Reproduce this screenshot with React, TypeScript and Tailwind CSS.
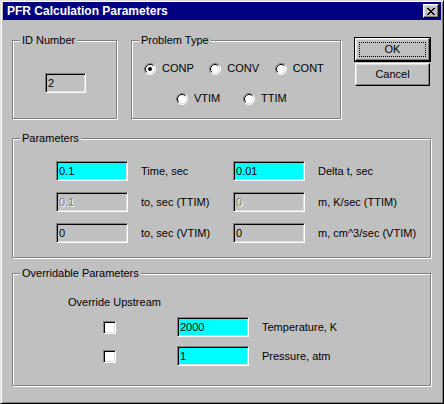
import React from "react";

const sunken =
  "border border-t-[#808080] border-l-[#808080] border-b-white border-r-white shadow-[inset_1px_1px_0_#000,inset_-1px_-1px_0_#dfdfdf]";
const raised =
  "border border-t-white border-l-white border-b-black border-r-black shadow-[inset_-1px_-1px_0_#808080,inset_1px_1px_0_#dfdfdf]";

function GroupBox({ label, className, children }: { label: string; className: string; children?: React.ReactNode }) {
  return (
    <div className={`relative border border-[#808080] shadow-[inset_1px_1px_0_#fff,1px_1px_0_#fff] ${className}`}>
      <span className="absolute left-[7px] -top-[7px] px-[2px] bg-[#c0c0c0] leading-[13px]">{label}</span>
      {children}
    </div>
  );
}

function Field({ value, tone = "cyan", w = "w-[72px]" }: { value: string; tone?: "cyan" | "gray" | "disabled"; w?: string }) {
  const bg = tone === "cyan" ? "bg-[#00ffff] text-black" : tone === "gray" ? "bg-[#c0c0c0] text-black" : "bg-[#c0c0c0] text-[#808080] [text-shadow:1px_1px_0_#fff]";
  return (
    <div className={`${sunken} ${bg} ${w} h-[20px] pl-[2px] flex items-center leading-[13px]`}>{value}</div>
  );
}

function Radio({ label, checked }: { label: string; checked?: boolean }) {
  return (
    <div className="w-[67px] flex items-center gap-[6px]">
      <svg width="12" height="12" viewBox="0 0 12 12" className="shrink-0">
        <circle cx="6" cy="6" r="5" fill="#fff" />
        <path d="M2.11 9.89 A5.5 5.5 0 0 1 9.89 2.11" stroke="#808080" fill="none" />
        <path d="M9.89 2.11 A5.5 5.5 0 0 1 2.11 9.89" stroke="#fff" fill="none" />
        <path d="M2.82 9.18 A4.5 4.5 0 0 1 9.18 2.82" stroke="#000" fill="none" />
        <path d="M9.18 2.82 A4.5 4.5 0 0 1 2.82 9.18" stroke="#dfdfdf" fill="none" />
        {checked && <circle cx="6" cy="6" r="2" fill="#000" />}
      </svg>
      <span className="leading-[13px]">{label}</span>
    </div>
  );
}

const xPixels = ["11000011", "01100110", "00111100", "00011000", "00111100", "01100110", "11000011"];

export default function App() {
  return (
    <div className="w-[444px] h-[404px] bg-[#c0c0c0] border border-t-[#dfdfdf] border-l-[#dfdfdf] border-b-black border-r-black shadow-[inset_1px_1px_0_#fff,inset_-1px_-1px_0_#808080] pt-px px-[2px] text-[11px] text-black font-['Liberation_Sans',Arial,sans-serif] overflow-hidden">
      {/* title bar */}
      <div className="h-[18px] bg-[#000080] flex items-center justify-between pl-[4px] pr-[2px]">
        <span className="text-white font-bold text-[12px] leading-[14px]">PFR Calculation Parameters</span>
        <div className={`${raised} w-[16px] h-[14px] bg-[#c0c0c0] flex items-center justify-center`}>
          <svg width="8" height="7" viewBox="0 0 8 7" shapeRendering="crispEdges">
            {xPixels.map((row, y) =>
              row.split("").map((c, x) => (c === "1" ? <rect key={`${x}-${y}`} x={x} y={y} width="1" height="1" fill="#000" /> : null))
            )}
          </svg>
        </div>
      </div>

      <div className="pl-[9px]">
        {/* top row */}
        <div className="flex items-start">
          <GroupBox label="ID Number" className="mt-[20px] w-[105px] h-[79px] pt-[32px] pl-[32px]">
            <Field value="2" tone="gray" w="w-[41px]" />
          </GroupBox>

          <GroupBox label="Problem Type" className="mt-[20px] ml-[14px] w-[210px] h-[79px] pt-[21px] pl-[12px]">
            <div className="flex">
              <Radio label="CONP" checked />
              <Radio label="CONV" />
              <Radio label="CONT" />
            </div>
            <div className="flex pl-[32px] mt-[17px]">
              <Radio label="VTIM" />
              <Radio label="TTIM" />
            </div>
          </GroupBox>

          <div className="mt-[17px] ml-[13px] flex flex-col items-center gap-[1px]">
            <button className="w-[77px] h-[25px] border border-black bg-[#c0c0c0] flex">
              <span className={`${raised} flex-1 flex p-[3px]`}>
                <span className="flex-1 border border-dotted border-black flex items-center justify-center leading-[13px]">OK</span>
              </span>
            </button>
            <button className={`${raised} w-[75px] h-[23px] bg-[#c0c0c0] flex items-center justify-center leading-[13px]`}>Cancel</button>
          </div>
        </div>

        {/* parameters */}
        <GroupBox label="Parameters" className="mt-[19px] w-[419px] h-[120px] pt-[22px] pl-[43px]">
          <div className="flex flex-col gap-[11px]">
            <div className="flex items-center">
              <Field value="0.1" />
              <span className="ml-[13px] w-[92px]">Time, sec</span>
              <Field value="0.01" />
              <span className="ml-[13px]">Delta t, sec</span>
            </div>
            <div className="flex items-center">
              <Field value="0.1" tone="disabled" />
              <span className="ml-[13px] w-[92px]">to, sec (TTIM)</span>
              <Field value="0" tone="disabled" />
              <span className="ml-[13px]">m, K/sec (TTIM)</span>
            </div>
            <div className="flex items-center">
              <Field value="0" tone="gray" />
              <span className="ml-[13px] w-[92px]">to, sec (VTIM)</span>
              <Field value="0" tone="gray" />
              <span className="ml-[13px]">m, cm^3/sec (VTIM)</span>
            </div>
          </div>
        </GroupBox>

        {/* overridable */}
        <GroupBox label="Overridable Parameters" className="mt-[15px] w-[419px] h-[113px] pt-[22px]">
          <div className="pl-[55px] leading-[13px]">Override Upstream</div>
          <div className="mt-[8px] flex flex-col gap-[9px] pl-[90px]">
            <div className="flex items-center">
              <div className={`${sunken} bg-white w-[13px] h-[13px]`} />
              <div className="ml-[61px]"><Field value="2000" /></div>
              <span className="ml-[13px]">Temperature, K</span>
            </div>
            <div className="flex items-center">
              <div className={`${sunken} bg-white w-[13px] h-[13px]`} />
              <div className="ml-[61px]"><Field value="1" /></div>
              <span className="ml-[13px]">Pressure, atm</span>
            </div>
          </div>
        </GroupBox>
      </div>
    </div>
  );
}
